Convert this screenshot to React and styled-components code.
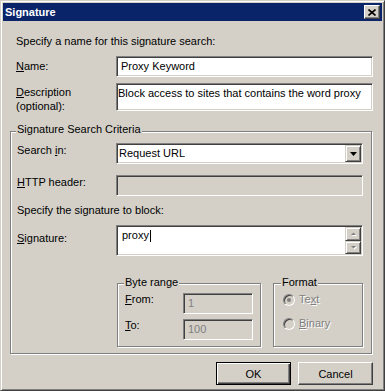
import React from 'react';
import styled, { createGlobalStyle } from 'styled-components';

const GlobalStyle = createGlobalStyle`
  html, body {
    margin: 0;
    padding: 0;
    background: #d4d0c8;
  }
  body {
    font-family: "Liberation Sans", Arial, sans-serif;
    font-size: 11px;
    color: #000;
  }
`;

const Window = styled.div`
  width: 385px;
  height: 391px;
  box-sizing: border-box;
  background: #d4d0c8;
  border: 1px solid;
  border-color: #d4d0c8 #404040 #404040 #d4d0c8;
  box-shadow: inset 1px 1px 0 #fff, inset -1px -1px 0 #808080;
  padding: 2px;
  display: flex;
  flex-direction: column;
`;

const TitleBar = styled.div`
  height: 18px;
  flex-shrink: 0;
  background: #0a246a;
  color: #fff;
  font-weight: bold;
  display: flex;
  align-items: center;
  justify-content: space-between;
  padding: 0 2px;
`;

const CloseBtn = styled.div`
  width: 16px;
  height: 14px;
  box-sizing: border-box;
  background: #d4d0c8;
  border: 1px solid;
  border-color: #fff #404040 #404040 #fff;
  box-shadow: inset -1px -1px 0 #808080;
  display: flex;
  align-items: center;
  justify-content: center;
`;

const Body = styled.div`
  flex: 1;
  display: flex;
  flex-direction: column;
  padding: 14px 9px 0 7px;
`;

const Intro = styled.div`
  line-height: 13px;
  padding-left: ${p => p.$indent || 0}px;
  margin-top: ${p => p.$top || 0}px;
`;

const Row = styled.div`
  display: flex;
  align-items: flex-start;
  margin-top: ${p => p.$top || 0}px;
  padding-left: ${p => p.$indent || 0}px;
`;

const Label = styled.div`
  width: ${p => p.$w}px;
  flex-shrink: 0;
  line-height: ${p => p.$lh || 13}px;
  padding-top: ${p => p.$pad || 0}px;
  color: ${p => (p.$disabled ? '#808080' : '#000')};
  text-shadow: ${p => (p.$disabled ? '1px 1px 0 #fff' : 'none')};
`;

const Key = styled.span`
  text-decoration: underline;
`;

const Sunken = styled.div`
  box-sizing: border-box;
  height: ${p => p.$h}px;
  width: ${p => (p.$w ? `${p.$w}px` : 'auto')};
  flex: ${p => (p.$w ? 'none' : 1)};
  background: ${p => (p.$disabled ? '#d4d0c8' : '#fff')};
  color: ${p => (p.$disabled ? '#808080' : '#000')};
  border: 1px solid;
  border-color: #808080 #fff #fff #808080;
  box-shadow: inset 1px 1px 0 #404040, inset -1px -1px 0 #d4d0c8;
  padding: 1px;
  display: flex;
  align-items: ${p => (p.$top ? 'flex-start' : 'center')};
`;

const FieldText = styled.div`
  flex: 1;
  line-height: 13px;
  padding: ${p => p.$pad || '0 0 0 3px'};
  white-space: nowrap;
  overflow: hidden;
  display: flex;
  align-items: center;
`;

const Caret = styled.span`
  display: inline-block;
  width: 1px;
  height: 12px;
  background: #000;
  margin-left: 1px;
`;

const RaisedBtn = styled.div`
  width: 16px;
  box-sizing: border-box;
  align-self: stretch;
  flex: ${p => (p.$grow ? 1 : 'none')};
  background: #d4d0c8;
  border: 1px solid;
  border-color: #d4d0c8 #404040 #404040 #d4d0c8;
  box-shadow: inset 1px 1px 0 #fff, inset -1px -1px 0 #808080;
  display: flex;
  align-items: center;
  justify-content: center;
`;

const ScrollBar = styled.div`
  width: 16px;
  align-self: stretch;
  display: flex;
  flex-direction: column;
`;

const Group = styled.div`
  position: relative;
  box-sizing: border-box;
  border: 1px solid #808080;
  box-shadow: 1px 1px 0 #fff, inset 1px 1px 0 #fff;
  margin-top: ${p => p.$top || 0}px;
  margin-right: ${p => p.$right || 0}px;
  width: ${p => (p.$w ? `${p.$w}px` : 'auto')};
  height: ${p => (p.$h ? `${p.$h}px` : 'auto')};
  padding: ${p => p.$pad};
`;

const Caption = styled.span`
  position: absolute;
  top: ${p => p.$top}px;
  left: ${p => p.$left}px;
  padding: 0 1px;
  line-height: 13px;
  background: #d4d0c8;
`;

const BottomBoxes = styled.div`
  display: flex;
  gap: 12px;
  margin-top: 27px;
  margin-left: 100px;
`;

const RadioRow = styled.div`
  display: flex;
  align-items: flex-start;
  gap: 4px;
  height: 21px;
  margin-top: ${p => p.$top || 0}px;
`;

const Radio = styled.span`
  width: 12px;
  height: 12px;
  box-sizing: border-box;
  border-radius: 50%;
  border: 1px solid;
  border-color: #808080 #fff #fff #808080;
  box-shadow: inset 1px 1px 0 #404040, inset -1px -1px 0 #d4d0c8;
  background: #d4d0c8;
  margin-top: 1px;
  display: flex;
  align-items: center;
  justify-content: center;

  &::after {
    content: '';
    width: 4px;
    height: 4px;
    border-radius: 50%;
    background: ${p => (p.$checked ? '#808080' : 'transparent')};
  }
`;

const ButtonRow = styled.div`
  display: flex;
  justify-content: flex-end;
  gap: 7px;
  margin-top: 8px;
`;

const Button = styled.button`
  width: 75px;
  height: 23px;
  box-sizing: border-box;
  font-family: inherit;
  font-size: 11px;
  color: #000;
  background: #d4d0c8;
  padding: 0;
  border: 1px solid;
  border-color: ${p => (p.$default ? '#000' : '#fff #404040 #404040 #fff')};
  box-shadow: ${p =>
    p.$default
      ? 'inset 1px 1px 0 #fff, inset -1px -1px 0 #404040, inset -2px -2px 0 #808080'
      : 'inset -1px -1px 0 #808080, inset 1px 1px 0 #d4d0c8'};
`;

const ArrowDown = ({ color = '#000' }) => (
  <svg width="7" height="4" viewBox="0 0 7 4">
    <path d="M0 0h7L3.5 4z" fill={color} />
  </svg>
);

const SmallArrow = ({ up }) => (
  <svg width="7" height="5" viewBox="0 0 7 5">
    <path d={up ? 'M1 4h5L3.5 1.5z' : 'M1 1h5L3.5 3.5z'} fill="#fff" transform="translate(1 1)" />
    <path d={up ? 'M1 4h5L3.5 1.5z' : 'M1 1h5L3.5 3.5z'} fill="#808080" />
  </svg>
);

const App = () => (
  <>
    <GlobalStyle />
    <Window>
      <TitleBar>
        <span>Signature</span>
        <CloseBtn>
          <svg width="8" height="7" viewBox="0 0 8 7">
            <path d="M0.5 0.5l7 6M7.5 0.5l-7 6" stroke="#000" strokeWidth="1.6" />
          </svg>
        </CloseBtn>
      </TitleBar>
      <Body>
        <Intro $indent={6}>Specify a name for this signature search:</Intro>
        <Row $top={8} $indent={6}>
          <Label $w={100} $pad={4}><Key>N</Key>ame:</Label>
          <Sunken $h={21}>
            <FieldText>Proxy Keyword</FieldText>
          </Sunken>
        </Row>
        <Row $top={6} $indent={6}>
          <Label $w={100} $pad={2} $lh={14}>
            <Key>D</Key>escription<br />(optional):
          </Label>
          <Sunken $h={28} $top>
            <FieldText $pad="2px 0 0 0">Block access to sites that contains the word proxy</FieldText>
          </Sunken>
        </Row>

        <Group $top={18} $right={1} $pad="11px 8px 6px 6px">
          <Caption $top={-9} $left={5}>Signature Search Criteria</Caption>
          <Row>
            <Label $w={99} $pad={1}>Search <Key>i</Key>n:</Label>
            <Sunken $h={21}>
              <FieldText $pad="0 0 0 1px">Request URL</FieldText>
              <RaisedBtn>
                <ArrowDown />
              </RaisedBtn>
            </Sunken>
          </Row>
          <Row $top={11}>
            <Label $w={99} $pad={1}><Key>H</Key>TTP header:</Label>
            <Sunken $h={21} $disabled />
          </Row>
          <Intro $top={8}>Specify the signature to block:</Intro>
          <Row $top={8}>
            <Label $w={99} $pad={7}><Key>S</Key>ignature:</Label>
            <Sunken $h={31} $top>
              <FieldText $pad="2px 0 0 4px">proxy<Caret /></FieldText>
              <ScrollBar>
                <RaisedBtn $grow><SmallArrow up /></RaisedBtn>
                <RaisedBtn $grow><SmallArrow /></RaisedBtn>
              </ScrollBar>
            </Sunken>
          </Row>

          <BottomBoxes>
            <Group $w={144} $h={64} $pad="9px 7px 0 7px">
              <Caption $top={-8} $left={6}>Byte range</Caption>
              <Row>
                <Label $w={58}><Key>F</Key>rom:</Label>
                <Sunken $h={21} $w={70} $disabled>
                  <FieldText>1</FieldText>
                </Sunken>
              </Row>
              <Row $top={5}>
                <Label $w={58}><Key>T</Key>o:</Label>
                <Sunken $h={21} $w={70} $disabled>
                  <FieldText>100</FieldText>
                </Sunken>
              </Row>
            </Group>
            <Group $w={90} $h={64} $pad="9px 0 0 9px">
              <Caption $top={-8} $left={7}>Format</Caption>
              <RadioRow>
                <Radio $checked />
                <Label $disabled>Te<Key>x</Key>t</Label>
              </RadioRow>
              <RadioRow $top={3}>
                <Radio />
                <Label $disabled><Key>B</Key>inary</Label>
              </RadioRow>
            </Group>
          </BottomBoxes>
        </Group>

        <ButtonRow>
          <Button $default>OK</Button>
          <Button>Cancel</Button>
        </ButtonRow>
      </Body>
    </Window>
  </>
);

export default App;
